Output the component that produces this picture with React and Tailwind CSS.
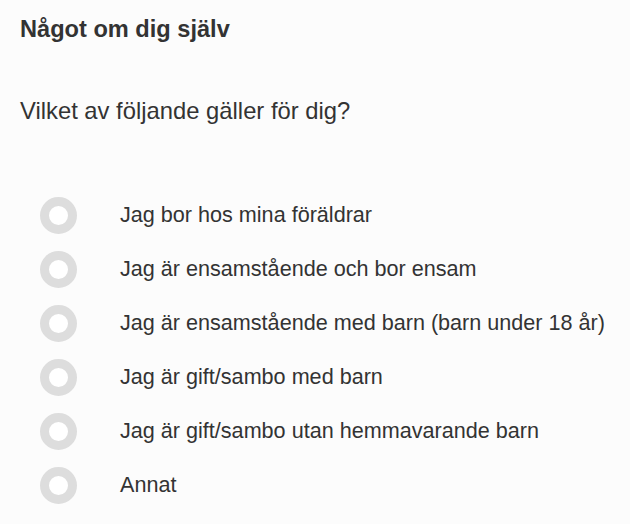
import React from "react";

const options = [
  "Jag bor hos mina föräldrar",
  "Jag är ensamstående och bor ensam",
  "Jag är ensamstående med barn (barn under 18 år)",
  "Jag är gift/sambo med barn",
  "Jag är gift/sambo utan hemmavarande barn",
  "Annat",
];

export default function App() {
  return (
    <div
      className="w-[630px] h-[524px] bg-[#fcfcfc] text-[#333333] px-5 overflow-hidden"
      style={{ fontFamily: '"Liberation Sans", Arial, sans-serif' }}
    >
      {/* Section title */}
      <h2 className="pt-[14px] text-[23.6px] font-bold leading-[30px]">Något om dig själv</h2>

      {/* Question */}
      <p className="mt-[51px] text-[23.8px] leading-[32px]">Vilket av följande gäller för dig?</p>

      {/* Options */}
      <div className="mt-[61px] flex flex-col">
        {options.map((itm, idx) => (
          <label key={idx} className="flex items-center h-[54px] cursor-pointer">
            <span className="ml-[20px] w-[37px] h-[37px] rounded-full border-[9px] border-[#dddddd] bg-white shrink-0" />
            <span className="ml-[43px] text-[21.6px] leading-[30px]">{itm}</span>
          </label>
        ))}
      </div>
    </div>
  );
}
